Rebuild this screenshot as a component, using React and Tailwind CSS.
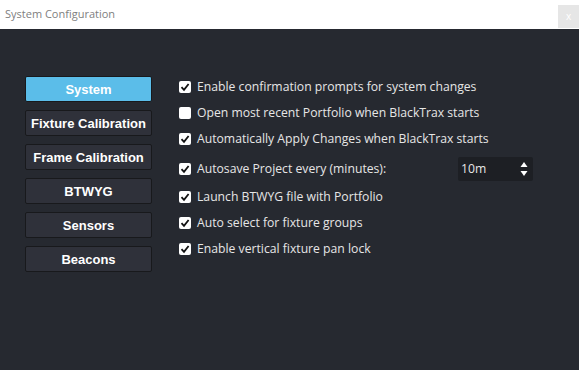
import React, { useState } from 'react'

const tabs = ['System', 'Fixture Calibration', 'Frame Calibration', 'BTWYG', 'Sensors', 'Beacons']

const options = [
  { label: 'Enable confirmation prompts for system changes', on: true },
  { label: 'Open most recent Portfolio when BlackTrax starts', on: false },
  { label: 'Automatically Apply Changes when BlackTrax starts', on: true },
  { label: 'Autosave Project every (minutes):', on: true, spin: true },
  { label: 'Launch BTWYG file with Portfolio', on: true },
  { label: 'Auto select for fixture groups', on: true },
  { label: 'Enable vertical fixture pan lock', on: true },
]

function Check({ on }) {
  return (
    <span className="w-[12px] h-[12px] rounded-[2px] bg-white flex items-center justify-center shrink-0">
      {on && (
        <svg width="10" height="10" viewBox="0 0 10 10">
          <path d="M1.5 5.2 L4 7.8 L8.6 2" fill="none" stroke="#111" strokeWidth="1.8" />
        </svg>
      )}
    </span>
  )
}

export default function App() {
  const [active, setActive] = useState(0)
  const [opts, setOpts] = useState(options)

  return (
    <div className="w-[579px] h-[370px] flex flex-col bg-[#262930]" style={{ fontFamily: '"Open Sans", "Noto Sans", sans-serif' }}>
      <div className="h-[29px] bg-white flex items-start justify-between shrink-0">
        <span className="pl-[5px] pt-[6px] text-[11px] text-[#808080] leading-[16px]">System Configuration</span>
        <span className="mt-[5px] w-[21px] h-[23px] bg-[#e6e6e6] text-white text-[10px] flex items-center justify-center">x</span>
      </div>

      <div className="flex pt-[45px] pl-[25px]">
        <div className="flex flex-col gap-[8px] w-[127px] mt-[2px]">
          {tabs.map((t, i) => (
            <button
              key={t}
              onClick={() => setActive(i)}
              className={
                'h-[26px] rounded-[2px] border border-[#18191c] text-[13px] font-bold text-white leading-none whitespace-nowrap ' +
                (active === i ? 'bg-[#5bbde9]' : 'bg-[#2f313a]')
              }
              style={{ fontFamily: '"Liberation Sans", Arial, sans-serif' }}
            >
              {t}
            </button>
          ))}
        </div>

        <div className="flex flex-col ml-[27px] w-[354px]">
          {opts.map((o, i) => (
            <div
              key={o.label}
              className={'flex items-center ' + (o.spin ? 'h-[32px] pt-[2px]' : 'h-[26px]')}
              onClick={() => setOpts(opts.map((p, j) => (j === i ? { ...p, on: !p.on } : p)))}
            >
              <Check on={o.on} />
              <span className="ml-[6px] text-[12.2px] text-[#e6e6e6] whitespace-nowrap">{o.label}</span>
              {o.spin && (
                <div className="ml-auto w-[75px] h-[24px] bg-[#1d1f24] rounded-[2px] flex items-center justify-between pl-[3px] pr-[5px]">
                  <span className="text-[12.2px] text-[#e6e6e6]">10m</span>
                  <svg width="8" height="18" viewBox="0 0 8 18">
                    <path d="M4 2 L7.5 7 L0.5 7 Z" fill="#fff" />
                    <path d="M4 16 L7.5 11 L0.5 11 Z" fill="#fff" />
                  </svg>
                </div>
              )}
            </div>
          ))}
        </div>
      </div>
    </div>
  )
}
